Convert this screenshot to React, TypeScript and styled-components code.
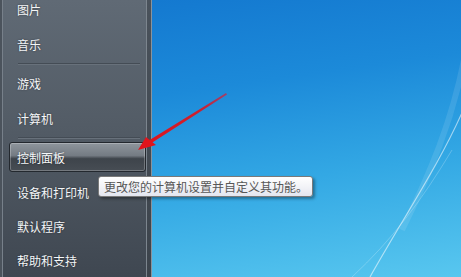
import React from "react";
import styled, { createGlobalStyle } from "styled-components";

const Global = createGlobalStyle`
  html, body { margin: 0; padding: 0; width: 461px; height: 277px; overflow: hidden; }
  body { font-family: "Noto Sans CJK SC", "Noto Sans", sans-serif; }
`;

const Screen = styled.div`
  position: relative;
  display: flex;
  width: 461px;
  height: 277px;
  overflow: hidden;
`;

const Panel = styled.div`
  flex: none;
  background: linear-gradient(180deg, #606a75 0%, #535c66 45%, #3f4751 100%);
  border-left: 2px solid #4b535c;
  box-shadow: inset 1px 0 0 #77808a;
  border-right: 1px solid #7c858e;
  display: flex;
  flex-direction: column;
  padding-left: 7px;
  box-sizing: border-box;
  width: 147px;
`;

const Frame = styled.div`
  width: 4px;
  flex: none;
  background: linear-gradient(180deg, #4a525b, #3c434b);
  border-right: 1px solid #8a939b;
`;

const List = styled.div`
  display: flex;
  flex-direction: column;
  margin-top: -8px;
`;

const Item = styled.div<{ $active?: boolean; $h?: number }>`
  height: ${(p) => p.$h ?? 35}px;
  display: flex;
  align-items: center;
  box-sizing: border-box;
  padding: ${(p) => (p.$active ? "2px 0 3px 0" : "0 0 0 8px")};
  color: #f4f6f8;
  font-size: 12px;
  text-shadow: 0 0 2px rgba(0, 0, 0, 0.45);
`;

const Highlight = styled.div`
  flex: 1;
  height: 100%;
  display: flex;
  align-items: center;
  padding-left: 7px;
  box-sizing: border-box;
  border: 1px solid #23282e;
  border-radius: 3px;
  background: linear-gradient(180deg, #8f969d 0%, #747b83 45%, #3e444b 56%, #474d54 100%);
  box-shadow: inset 0 0 0 1px rgba(255, 255, 255, 0.25);
`;

const Separator = styled.div`
  height: 4px;
  margin: 0 6px 0 9px;
  display: flex;
  flex-direction: column;
  justify-content: center;
  &::before {
    content: "";
    height: 1px;
    background: #444c55;
  }
  &::after {
    content: "";
    height: 1px;
    background: #68717b;
  }
`;

const Desktop = styled.div`
  flex: 1;
  position: relative;
  background: linear-gradient(172deg, #1479d0 0%, #1c8ad9 30%, #33a8e4 62%, #58c7ef 100%);
`;

const Wallpaper = styled.svg`
  position: absolute;
  inset: 0;
  width: 100%;
  height: 100%;
`;

const Arrow = styled.svg`
  position: absolute;
  left: 0;
  top: 0;
  width: 461px;
  height: 277px;
  pointer-events: none;
`;

const Tooltip = styled.div`
  position: absolute;
  left: 98px;
  top: 176px;
  width: 215px;
  height: 21px;
  box-sizing: border-box;
  border: 1px solid #7a7a7a;
  border-radius: 3px;
  background: linear-gradient(180deg, #ffffff 0%, #f0f1f6 60%, #e3e5ef 100%);
  box-shadow: 2px 2px 3px rgba(0, 0, 0, 0.35);
  color: #575757;
  font-size: 12px;
  display: flex;
  align-items: center;
  padding-left: 5px;
  white-space: nowrap;
`;

const items1 = ["图片", "音乐"];
const items2 = ["游戏", "计算机"];
const items3 = ["设备和打印机", "默认程序", "帮助和支持"];

export default function App() {
  return (
    <>
      <Global />
      <Screen>
        <Panel>
          <List>
            {items1.map((t) => (
              <Item key={t}>{t}</Item>
            ))}
            <Separator />
            {items2.map((t) => (
              <Item key={t}>{t}</Item>
            ))}
            <Separator />
            <Item $active>
              <Highlight>控制面板</Highlight>
            </Item>
            {items3.map((t) => (
              <Item key={t} $h={34}>
                {t}
              </Item>
            ))}
          </List>
        </Panel>
        <Frame />
        <Desktop>
          <Wallpaper viewBox="0 0 309 277" preserveAspectRatio="none">
            <path d="M312 108 C 290 160, 250 220, 218 277" stroke="rgba(255,255,255,0.55)" strokeWidth="1.2" fill="none" />
            <path d="M300 150 C 270 200, 240 240, 200 277" stroke="rgba(255,255,255,0.22)" strokeWidth="1" fill="none" />
            <path d="M312 60 C 300 120, 280 170, 250 230" stroke="rgba(255,255,255,0.1)" strokeWidth="6" fill="none" />
          </Wallpaper>
        </Desktop>
        <Arrow viewBox="0 0 461 277">
          <defs>
            <linearGradient id="ar" x1="226" y1="93" x2="140" y2="150" gradientUnits="userSpaceOnUse">
              <stop offset="0" stopColor="#a0406a" />
              <stop offset="0.3" stopColor="#cc1f2e" />
              <stop offset="1" stopColor="#e0141c" />
            </linearGradient>
          </defs>
          <polygon points="226,93 227,94.5 150,144 148,141" fill="url(#ar)" />
          <polygon points="138,150 146,137 156,145" fill="#e0141c" />
        </Arrow>
        <Tooltip>更改您的计算机设置并自定义其功能。</Tooltip>
      </Screen>
    </>
  );
}
